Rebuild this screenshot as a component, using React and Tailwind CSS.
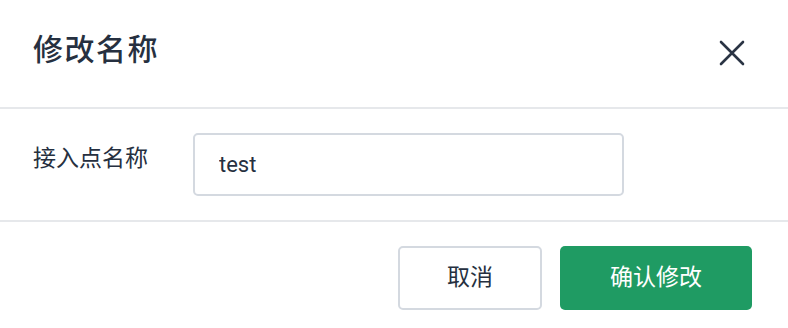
import React, { useState } from "react";

const font = { fontFamily: "Roboto, 'Noto Sans CJK SC', sans-serif" };

const CloseIcon = () => (
  <svg width="26" height="26" viewBox="0 0 26 26" fill="none">
    <path
      d="M2 2L24 24M24 2L2 24"
      stroke="#2a3444"
      strokeWidth="2.6"
      strokeLinecap="round"
    />
  </svg>
);

export default function App() {
  const [name, setName] = useState("test");

  return (
    <div
      className="w-[788px] h-[328px] bg-white text-[#263040]"
      style={font}
    >
      {/* header */}
      <div className="flex items-center justify-between h-[109px] pl-[33px] pr-[43px] pb-[8px] border-b-2 border-[#e6e8eb]">
        <h2 className="text-[30px] font-medium leading-none tracking-[1.5px]">
          修改名称
        </h2>
        <button className="mt-[6px]">
          <CloseIcon />
        </button>
      </div>

      {/* body */}
      <div className="flex items-start pl-[33px] pt-[24px] pb-[24px] border-b-2 border-[#e6e8eb]">
        <label className="w-[160px] pt-[13px] text-[23px] leading-[26px]">
          接入点名称
        </label>
        <input
          value={name}
          onChange={(e) => setName(e.target.value)}
          className="w-[431px] h-[63px] px-[24px] border-2 border-[#d4d9e0] rounded-[5px] text-[22px] text-[#263040] outline-none"
        />
      </div>

      {/* footer */}
      <div className="flex justify-end gap-[18px] pt-[24px] pr-[36px]">
        <button className="w-[144px] h-[64px] border-2 border-[#d4d9e0] rounded-[5px] bg-white text-[23px] text-[#263040]">
          取消
        </button>
        <button className="w-[192px] h-[64px] rounded-[5px] bg-[#1f9b63] text-[23px] text-white">
          确认修改
        </button>
      </div>
    </div>
  );
}
